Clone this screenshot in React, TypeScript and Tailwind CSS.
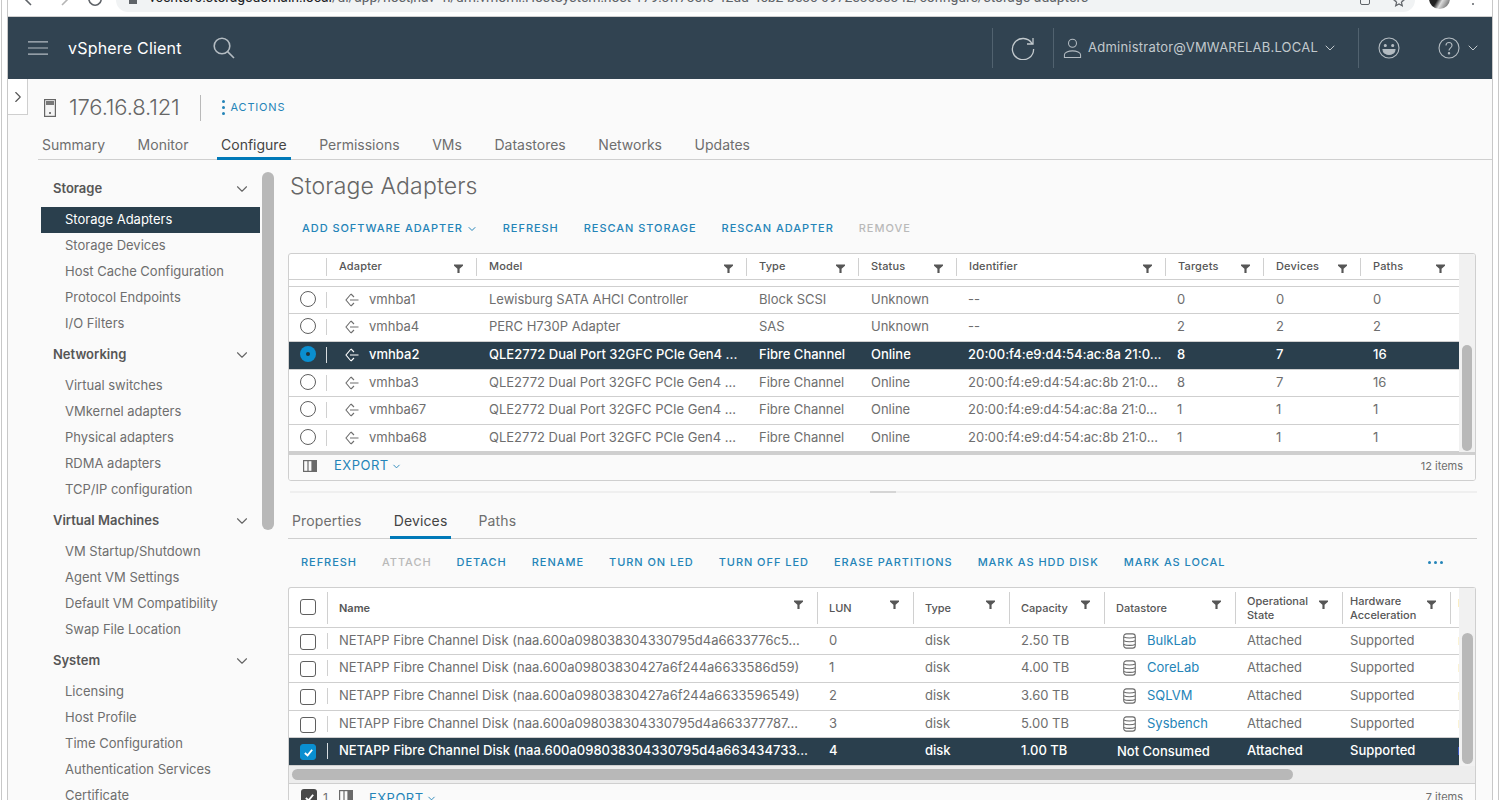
import { ChevronDown, ChevronRight } from "lucide-react";
import type { ReactNode } from "react";

const navGroups = [
  { title: "Storage", items: ["Storage Adapters", "Storage Devices", "Host Cache Configuration", "Protocol Endpoints", "I/O Filters"] },
  { title: "Networking", items: ["Virtual switches", "VMkernel adapters", "Physical adapters", "RDMA adapters", "TCP/IP configuration"] },
  { title: "Virtual Machines", items: ["VM Startup/Shutdown", "Agent VM Settings", "Default VM Compatibility", "Swap File Location"] },
  { title: "System", items: ["Licensing", "Host Profile", "Time Configuration", "Authentication Services", "Certificate"] },
];

const adapterCols = [
  { label: "Adapter", w: "w-[150px]" },
  { label: "Model", w: "w-[270px]" },
  { label: "Type", w: "w-[112px]" },
  { label: "Status", w: "w-[98px]" },
  { label: "Identifier", w: "w-[209px]" },
  { label: "Targets", w: "w-[98px]" },
  { label: "Devices", w: "w-[97px]" },
  { label: "Paths", w: "w-[98px]" },
];

const adapters = [
  { name: "vmhba1", model: "Lewisburg SATA AHCI Controller", type: "Block SCSI", status: "Unknown", id: "--", t: "0", d: "0", p: "0", h: "h-[27px]" },
  { name: "vmhba4", model: "PERC H730P Adapter", type: "SAS", status: "Unknown", id: "--", t: "2", d: "2", p: "2", h: "h-[28px]" },
  { name: "vmhba2", model: "QLE2772 Dual Port 32GFC PCIe Gen4 ...", type: "Fibre Channel", status: "Online", id: "20:00:f4:e9:d4:54:ac:8a 21:0...", t: "8", d: "7", p: "16", h: "h-[28px]", active: true },
  { name: "vmhba3", model: "QLE2772 Dual Port 32GFC PCIe Gen4 ...", type: "Fibre Channel", status: "Online", id: "20:00:f4:e9:d4:54:ac:8b 21:0...", t: "8", d: "7", p: "16", h: "h-[27px]" },
  { name: "vmhba67", model: "QLE2772 Dual Port 32GFC PCIe Gen4 ...", type: "Fibre Channel", status: "Online", id: "20:00:f4:e9:d4:54:ac:8a 21:0...", t: "1", d: "1", p: "1", h: "h-[28px]" },
  { name: "vmhba68", model: "QLE2772 Dual Port 32GFC PCIe Gen4 ...", type: "Fibre Channel", status: "Online", id: "20:00:f4:e9:d4:54:ac:8b 21:0...", t: "1", d: "1", p: "1", h: "h-[27px]" },
];

const disks = [
  { name: "NETAPP Fibre Channel Disk (naa.600a098038304330795d4a6633776c5...", lun: "0", cap: "2.50 TB", ds: "BulkLab", h: "h-[27px]" },
  { name: "NETAPP Fibre Channel Disk (naa.600a09803830427a6f244a6633586d59)", lun: "1", cap: "4.00 TB", ds: "CoreLab", h: "h-[28px] pb-[1px]" },
  { name: "NETAPP Fibre Channel Disk (naa.600a09803830427a6f244a6633596549)", lun: "2", cap: "3.60 TB", ds: "SQLVM", h: "h-[28px] pb-[1px]" },
  { name: "NETAPP Fibre Channel Disk (naa.600a098038304330795d4a663377787...", lun: "3", cap: "5.00 TB", ds: "Sysbench", h: "h-[27px]" },
  { name: "NETAPP Fibre Channel Disk (naa.600a098038304330795d4a663434733...", lun: "4", cap: "1.00 TB", ds: "Not Consumed", h: "h-[28px] pb-[1px]", active: true },
];

function FilterIcon({ className = "" }: { className?: string }) {
  return (
    <svg viewBox="0 0 10 10" className={`h-[9px] w-[9px] shrink-0 ${className}`} fill="#565656">
      <path d="M0 .5h10v1.4L6.2 5.2V10H3.8V5.2L0 1.9z" />
    </svg>
  );
}

function AdapterIcon() {
  return (
    <svg viewBox="0 0 14 14" className="h-[14px] w-[14px] shrink-0" fill="none" stroke="currentColor" strokeWidth="1.1">
      <path d="M6 1 1 7l5 6" />
      <path d="M6 1l3 3M6 13l3-3M5 7h8.5" />
    </svg>
  );
}

function DatastoreIcon() {
  return (
    <svg viewBox="0 0 16 18" className="h-[16px] w-[15px]" fill="none" stroke="#6a6a6a" strokeWidth="1.2">
      <rect x="1.5" y="1" width="13" height="16" rx="3" />
      <path d="M1.5 4.5c3 1.4 10 1.4 13 0M1.5 8.7c3 1.4 10 1.4 13 0M1.5 12.9c3 1.4 10 1.4 13 0" />
    </svg>
  );
}

function Radio({ checked }: { checked?: boolean }) {
  if (checked) {
    return (
      <span className="flex h-[16px] w-[16px] items-center justify-center rounded-full bg-[#0a8fd0]">
        <span className="h-[4px] w-[4px] rounded-full bg-[#21333b]" />
      </span>
    );
  }
  return <span className="block h-[16px] w-[16px] rounded-full border border-[#5f5f5f] bg-white" />;
}

function CheckBox({ checked }: { checked?: boolean }) {
  return (
    <span className={`flex h-[16px] w-[16px] items-center justify-center rounded-[3px] border ${checked ? "border-[#0a8fd0] bg-[#0a8fd0]" : "border-[#5f5f5f] bg-white"}`}>
      {checked ? (
        <svg viewBox="0 0 12 12" className="h-[11px] w-[11px]" fill="none" stroke="white" strokeWidth="2">
          <path d="M2 6.5 5 9.2 10 3" />
        </svg>
      ) : null}
    </span>
  );
}

function ActionLink({ children, muted }: { children: ReactNode; muted?: boolean }) {
  return (
    <span className={`flex items-center text-[11px] font-medium tracking-[.95px] ${muted ? "text-[#b9b9b9]" : "text-[#2484b8]"}`}>
      {children}
    </span>
  );
}

function ColumnsIcon() {
  return (
    <svg viewBox="0 0 14 12" className="h-[12px] w-[14px]" fill="none" stroke="#6a6a6a" strokeWidth="1.2">
      <rect x=".6" y=".6" width="12.8" height="10.8" />
      <path d="M5 .6v10.8" />
      <path d="M9 .6h4.4v10.8H9z" fill="#6a6a6a" />
    </svg>
  );
}

function BrowserStrip() {
  return (
    <div className="flex h-[17px] items-start overflow-hidden border-b border-[#d0d0d0] bg-white">
      <div className="flex w-[108px] -translate-y-[9px] items-center pl-[15px] text-[#5f6368]">
        <svg viewBox="0 0 16 16" className="h-[16px] w-[16px]" fill="none" stroke="currentColor" strokeWidth="1.6"><path d="M14 8H2M8 2 2 8l6 6" /></svg>
        <svg viewBox="0 0 16 16" className="ml-[15px] h-[16px] w-[16px]" fill="none" stroke="#b5b5b5" strokeWidth="1.6"><path d="M2 8h12M8 2l6 6-6 6" /></svg>
        <svg viewBox="0 0 16 16" className="ml-[17px] h-[16px] w-[16px]" fill="none" stroke="currentColor" strokeWidth="1.6"><path d="M13.5 5A6.2 6.2 0 1 0 14.2 9M14 1v4.4H9.6" /></svg>
      </div>
      <div className="flex h-[12px] w-[1299px] shrink-0 items-start overflow-hidden rounded-b-[14px] bg-[#f1f3f4] pl-[13px]">
        <span className="mr-[12px] h-[4px] w-[8px] bg-[#5f6368]" />
        <span className="-mt-[10px] whitespace-nowrap text-[14px] leading-[14px] tracking-[-.07px] text-[#5f6368] [font-family:Roboto,sans-serif]">
          <span className="text-[#202124]">vcenter0.storagedomain.local</span>/ui/app/host;nav=h/urn:vmomi:HostSystem:host-179:3ff73efc-42dd-4cb2-be3c-0972e303e342/configure/storage-adapters
        </span>
      </div>
      <div className="flex items-start">
        <span className="-ml-[55px] -mt-[5px] h-[10px] w-[10px] rounded-[2px] border border-[#5f6368]" />
        <svg viewBox="0 0 12 12" className="ml-[23px] h-[12px] w-[12px] -translate-y-[5px]" fill="none" stroke="#5f6368" strokeWidth="1.2"><path d="M6 1l1.5 3.4 3.7.4-2.8 2.4.9 3.6L6 9l-3.3 1.8.9-3.6L.8 4.8l3.7-.4z" /></svg>
        <span className="ml-[24px] -mt-[12px] h-[21px] w-[21px] rounded-full bg-[linear-gradient(120deg,#222_45%,#ddd_62%,#444)]" />
        <span className="ml-[22px] mt-[3px] h-[2px] w-[2px] rounded-full bg-[#5f6368]" />
      </div>
    </div>
  );
}

function TopBar() {
  return (
    <header className="flex h-[62px] items-center bg-[#314351] text-[#d5dadd]">
      <svg viewBox="0 0 20 14" className="ml-[20px] h-[14px] w-[20px]" fill="none" stroke="#b4bcc2" strokeWidth="1.2">
        <path d="M0 .8h20M0 7h20M0 13.2h20" />
      </svg>
      <span className="ml-[20px] text-[16px] font-normal tracking-[.2px] text-white">vSphere Client</span>
      <svg viewBox="0 0 22 22" className="ml-[31px] h-[22px] w-[22px]" fill="none" stroke="#b4bcc2" strokeWidth="1.6">
        <circle cx="9" cy="9" r="7.8" />
        <path d="m14.6 14.6 6.4 6.4" />
      </svg>
      <div className="ml-auto flex h-[40px] items-center">
        <div className="h-full border-l border-[#51626f]" />
        <svg viewBox="0 0 24 24" className="mx-[18px] h-[24px] w-[24px]" fill="none" stroke="#c2c9cd" strokeWidth="1.3">
          <path d="M21 7.5A10.6 10.6 0 1 0 22.6 13M22 2v6h-6" />
        </svg>
        <div className="h-full border-l border-[#51626f]" />
        <svg viewBox="0 0 20 22" className="ml-[9px] h-[21px] w-[19px]" fill="none" stroke="#b4bcc2" strokeWidth="1.1">
          <circle cx="10" cy="5.5" r="4.2" />
          <path d="M1.5 20.5v-3c0-2 4-4 8.5-4s8.5 2 8.5 4v3z" />
        </svg>
        <span className="ml-[6px] text-[13px] font-normal tracking-[.22px] text-[#c2c9cd]">Administrator@VMWARELAB.LOCAL</span>
        <ChevronDown className="ml-[4px] h-[16px] w-[16px] text-[#c2c9cd]" strokeWidth={1.5} />
        <div className="ml-[20px] h-full border-l border-[#51626f]" />
        <svg viewBox="0 0 22 22" className="ml-[19px] h-[22px] w-[22px]" fill="none" stroke="#b4bcc2" strokeWidth="1.1">
          <circle cx="11" cy="11" r="10" />
          <circle cx="7.3" cy="8.5" r="1" fill="#b4bcc2" />
          <circle cx="14.7" cy="8.5" r="1" fill="#b4bcc2" />
          <path d="M5 12.5h12c0 3-2.6 5-6 5s-6-2-6-5z" fill="#b4bcc2" />
        </svg>
        <svg viewBox="0 0 22 22" className="ml-[38px] h-[22px] w-[22px]" fill="none" stroke="#b4bcc2" strokeWidth="1.1">
          <circle cx="11" cy="11" r="10" />
          <path d="M8 8.5c0-4 6-4 6 0 0 2.3-3 2.4-3 5" />
          <circle cx="11" cy="16.3" r=".7" fill="#b4bcc2" />
        </svg>
        <ChevronDown className="ml-[5px] mr-[11px] h-[16px] w-[16px] text-[#c2c9cd]" strokeWidth={1.5} />
      </div>
    </header>
  );
}

function SideNav() {
  return (
    <aside className="flex w-[249px] shrink-0 pl-[33px]">
      <nav className="w-[219px] shrink-0 pt-[15px]">
        {navGroups.map((group) => (
          <div key={group.title} className="mb-[4px]">
            <div className="flex h-[26px] items-center justify-between pl-[12px] pr-[9px] pt-[2px] text-[13px] font-semibold text-[#565656]">
              {group.title}
              <ChevronDown className="h-[18px] w-[18px] text-[#666]" strokeWidth={1.5} />
            </div>
            <div className="mt-[6px]">
              {group.items.map((item) => (
                <div
                  key={item}
                  className={`flex h-[26px] items-center pl-[24px] text-[13px] ${item === "Storage Adapters" ? "bg-[#2a3f4d] text-white" : "text-[#6e6e6e]"}`}
                >
                  {item}
                </div>
              ))}
            </div>
          </div>
        ))}
      </nav>
      <div className="ml-[2px] mt-[12px] h-[358px] w-[12px] shrink-0 rounded-full bg-[#b8b8b8]" />
    </aside>
  );
}

function AdaptersTable() {
  return (
    <div className="-ml-[2px] mt-[6px] h-[228px] w-[1188px] overflow-hidden rounded-[3px] border border-[#cfcfcf] bg-white">
      <div className="flex h-[198px]">
        <div className="w-[1170px] shrink-0">
          <div className="flex h-[26px] items-center border-b border-[#cfcfcf] text-[11px] font-medium tracking-[.15px] text-[#565656]">
            <div className="h-[18px] w-[37px] shrink-0" />
            {adapterCols.map((col) => (
              <div key={col.label} className={`flex h-[18px] items-center justify-between border-l border-[#d0d0d0] pl-[12px] pr-[13px] ${col.w}`}>
                {col.label}
                <FilterIcon className="translate-y-[2px]" />
              </div>
            ))}
          </div>
          <div className="h-[7px] border-b border-[#cfcfcf]" />
          {adapters.map((row) => (
            <div
              key={row.name}
              className={`flex items-center border-b border-[#cfcfcf] pb-[1px] text-[13px] ${row.h} ${row.active ? "bg-[#2a3f4d] font-medium text-white" : "text-[#6e6e6e]"}`}
            >
              <div className="flex w-[37px] shrink-0 justify-center pb-[2px] pl-[1px]">
                <Radio checked={row.active} />
              </div>
              <div className={`flex h-[16px] w-[150px] shrink-0 items-center gap-[10px] border-l pl-[18px] ${row.active ? "border-[#d8dde0]" : "border-[#d0d0d0]"}`}>
                <AdapterIcon />
                {row.name}
              </div>
              <div className="w-[270px] shrink-0 whitespace-nowrap pl-[13px]">{row.model}</div>
              <div className="w-[112px] shrink-0 pl-[13px]">{row.type}</div>
              <div className="w-[98px] shrink-0 pl-[13px]">{row.status}</div>
              <div className="w-[209px] shrink-0 whitespace-nowrap pl-[12px]">{row.id}</div>
              <div className="w-[98px] shrink-0 pl-[12px]">{row.t}</div>
              <div className="w-[97px] shrink-0 pl-[13px]">{row.d}</div>
              <div className="w-[98px] shrink-0 pl-[13px]">{row.p}</div>
            </div>
          ))}
        </div>
        <div className="flex grow items-end bg-[#f1f1f1] px-[3px] pb-[1px]">
          <div className="h-[106px] w-full rounded-full bg-[#b8b8b8]" />
        </div>
      </div>
      <div className="flex h-[28px] items-center border-t-[3px] border-[#cfcfcf] bg-[#fafafa] pb-[3px] pl-[14px] pr-[12px] text-[#6e6e6e]">
        <ColumnsIcon />
        <span className="ml-[17px] flex items-center text-[13px] tracking-[.5px] text-[#2484b8]">
          EXPORT
          <ChevronDown className="ml-[2px] h-[11px] w-[11px]" strokeWidth={2} />
        </span>
        <span className="ml-auto text-[11px]">12 items</span>
      </div>
    </div>
  );
}

function HeadCell({ w, label, bold, narrow }: { w: string; label: ReactNode; bold?: boolean; narrow?: boolean }) {
  return (
    <div className={`relative flex h-[32px] shrink-0 items-center border-l border-[#d0d0d0] ${narrow ? "pl-[7px]" : "pl-[11px]"} ${w} ${bold ? "font-semibold" : ""}`}>
      <span className="leading-[14px]">{label}</span>
      <FilterIcon className="absolute right-[14px] top-[8px]" />
    </div>
  );
}

function DevicesTable() {
  return (
    <div className="-ml-[2px] w-[1188px] rounded-t-[3px] border border-b-0 border-[#cfcfcf] bg-white">
      <div className="flex">
        <div className="w-[1170px] shrink-0 overflow-hidden">
          <div className="flex h-[40px] items-center border-b border-[#cfcfcf] text-[11px] font-medium text-[#565656]">
            <div className="flex w-[38px] shrink-0 justify-center pb-[2px]">
              <CheckBox />
            </div>
            <HeadCell w="w-[490px]" label="Name" bold />
            <HeadCell w="w-[96px]" label="LUN" />
            <HeadCell w="w-[96px]" label="Type" />
            <HeadCell w="w-[95px]" label="Capacity" />
            <HeadCell w="w-[131px]" label="Datastore" />
            <HeadCell w="w-[107px]" label={<>Operational<br />State</>} />
            <HeadCell w="w-[108px]" label={<>Hardware<br />Acceleration</>} narrow />
            <div className="h-[32px] border-l border-[#d0d0d0]" />
            <span className="ml-[7px] h-[8px] w-[2px] -translate-y-[5px] bg-[#fbeec4]" />
          </div>
          {disks.map((row) => (
            <div
              key={row.lun}
              className={`flex items-center border-b border-[#cfcfcf] text-[13px] ${row.h} ${row.active ? "bg-[#2a3f4d] font-medium text-white" : "text-[#6e6e6e]"}`}
            >
              <div className="flex w-[38px] shrink-0 justify-center pt-[2px]">
                <CheckBox checked={row.active} />
              </div>
              <div className={`flex h-[16px] w-[490px] shrink-0 items-center whitespace-nowrap border-l pl-[11px] ${row.active ? "border-[#d8dde0]" : "border-[#d0d0d0]"}`}>
                {row.name}
              </div>
              <div className="w-[96px] shrink-0 pl-[12px]">{row.lun}</div>
              <div className="w-[96px] shrink-0 pl-[12px]">disk</div>
              <div className="w-[95px] shrink-0 pl-[12px]">{row.cap}</div>
              {row.active ? (
                <div className="w-[131px] shrink-0 pl-[13px] pt-[2px]">{row.ds}</div>
              ) : (
                <div className="flex w-[131px] shrink-0 items-center gap-[10px] pl-[18px]">
                  <DatastoreIcon />
                  <span className="text-[#2484b8]">{row.ds}</span>
                </div>
              )}
              <div className="w-[107px] shrink-0 pl-[12px]">Attached</div>
              <div className="w-[108px] shrink-0 pl-[8px]">Supported</div>
              <span className={`ml-[8px] h-[8px] w-[2px] ${row.active ? "bg-[#3b57c0]" : "bg-[#fbf3d5]"}`} />
            </div>
          ))}
        </div>
        <div className="flex grow justify-center bg-[#f1f1f1] pt-[45px]">
          <div className="h-[131px] w-[11px] rounded-full bg-[#b8b8b8]" />
        </div>
      </div>
      <div className="flex h-[17px] items-center bg-[#ededed] pl-[3px]">
        <div className="h-[11px] w-[1001px] rounded-full bg-[#b8b8b8]" />
      </div>
      <div className="flex h-[30px] items-start border-t border-[#cfcfcf] bg-[#fafafa] pl-[12px] pr-[12px] pt-[5px] text-[#6e6e6e]">
        <span className="flex h-[16px] w-[16px] items-center justify-center rounded-[3px] bg-[#484848]">
          <svg viewBox="0 0 12 12" className="h-[11px] w-[11px]" fill="none" stroke="white" strokeWidth="2">
            <path d="M2 6.5 5 9.2 10 3" />
          </svg>
        </span>
        <span className="ml-[6px] text-[12px]">1</span>
        <span className="ml-[11px] mt-[1px]"><ColumnsIcon /></span>
        <span className="ml-[16px] flex items-center text-[13px] tracking-[.5px] text-[#2484b8]">
          EXPORT
          <ChevronDown className="ml-[2px] h-[11px] w-[11px]" strokeWidth={2} />
        </span>
        <span className="ml-auto text-[11px]">7 items</span>
      </div>
    </div>
  );
}

export default function App() {
  return (
    <div className="h-[800px] w-[1500px] overflow-hidden bg-white [font-family:Inter,sans-serif]">
      <div className="mx-[1px] h-full border-x border-[#c8c8c8] pl-[5px]">
        <div className="h-full w-[1486px] border-x border-[#c8c8c8]">
          <BrowserStrip />
          <TopBar />
          <main className="relative h-[721px] bg-[#fafafa]">
            <div className="absolute left-0 top-0 flex h-[36px] w-[20px] items-center justify-center border-b border-r border-[#cfcfcf] bg-white">
              <ChevronRight className="h-[18px] w-[18px] text-[#555]" strokeWidth={1.5} />
            </div>
            <div className="flex h-[56px] items-center pl-[36px] pt-[1px]">
              <svg viewBox="0 0 12 18" className="h-[18px] w-[12px]" fill="none" stroke="#666" strokeWidth="1.2">
                <rect x=".6" y=".6" width="10.8" height="16.8" fill="#f4f4f4" />
                <rect x="2" y="2" width="8" height="4" fill="#777" stroke="none" />
                <circle cx="6" cy="14" r="1" fill="#555" stroke="none" />
              </svg>
              <span className="ml-[13px] text-[22px] font-light tracking-[-.15px] text-[#666]">176.16.8.121</span>
              <span className="ml-[20px] h-[26px] border-l border-[#b9b9b9]" />
              <span className="ml-[21px] flex flex-col gap-[3px]">
                <i className="h-[3px] w-[3px] rounded-full bg-[#2484b8]" />
                <i className="h-[3px] w-[3px] rounded-full bg-[#2484b8]" />
                <i className="h-[3px] w-[3px] rounded-full bg-[#2484b8]" />
              </span>
              <span className="ml-[6px] text-[11px] tracking-[.8px] text-[#2484b8]">ACTIONS</span>
            </div>
            <div className="ml-[30px] flex h-[25px] items-start border-b border-[#cfcfcf] text-[14px] text-[#6e6e6e]">
              {["Summary", "Monitor", "Configure", "Permissions", "VMs", "Datastores", "Networks", "Updates"].map((tab) => (
                <span
                  key={tab}
                  className={`-mb-[1px] mr-[24.6px] h-[25px] px-[4px] leading-[20px] ${tab === "Configure" ? "border-b-[3px] border-[#0079b8] text-[#444]" : ""}`}
                >
                  {tab}
                </span>
              ))}
            </div>
            <div className="flex">
              <SideNav />
              <section className="ml-[33px] w-[1187px]">
                <h1 className="h-[40px] pt-[12px] text-[23px] font-light leading-[28px] tracking-[.15px] text-[#666]">Storage Adapters</h1>
                <div className="flex h-[47px] items-center gap-[25px] pl-[12px] pt-[10px]">
                  <ActionLink>
                    ADD SOFTWARE ADAPTER
                    <ChevronDown className="ml-[3px] h-[12px] w-[12px]" strokeWidth={2} />
                  </ActionLink>
                  <ActionLink>REFRESH</ActionLink>
                  <ActionLink>RESCAN STORAGE</ActionLink>
                  <ActionLink>RESCAN ADAPTER</ActionLink>
                  <ActionLink muted>REMOVE</ActionLink>
                </div>
                <AdaptersTable />
                <div className="relative mt-[10px] h-[2px] bg-[#efefef]">
                  <span className="absolute left-[580px] top-0 h-[2px] w-[26px] bg-[#d5d5d5]" />
                </div>
                <div className="-ml-[2px] mt-[18px] flex h-[28px] items-start border-b border-[#cfcfcf] pl-[2px] text-[14px] tracking-[.15px] text-[#6e6e6e]">
                  {["Properties", "Devices", "Paths"].map((tab) => (
                    <span
                      key={tab}
                      className={`-mb-[1px] mr-[25px] h-[28px] px-[2px] leading-[20px] ${tab === "Devices" ? "border-b-[3px] border-[#0079b8] px-[4px] text-[#444]" : ""} ${tab === "Properties" ? "mr-[26px]" : ""}`}
                    >
                      {tab}
                    </span>
                  ))}
                </div>
                <div className="flex h-[48px] items-center gap-[25px] pb-[2px] pl-[11px] pr-[34px]">
                  {["REFRESH", "ATTACH", "DETACH", "RENAME", "TURN ON LED", "TURN OFF LED", "ERASE PARTITIONS", "MARK AS HDD DISK", "MARK AS LOCAL"].map((a) => (
                    <ActionLink key={a} muted={a === "ATTACH"}>{a}</ActionLink>
                  ))}
                  <span className="ml-auto flex gap-[3px]">
                    <i className="h-[3px] w-[3px] rounded-full bg-[#2484b8]" />
                    <i className="h-[3px] w-[3px] rounded-full bg-[#2484b8]" />
                    <i className="h-[3px] w-[3px] rounded-full bg-[#2484b8]" />
                  </span>
                </div>
                <DevicesTable />
              </section>
            </div>
          </main>
        </div>
      </div>
    </div>
  );
}
